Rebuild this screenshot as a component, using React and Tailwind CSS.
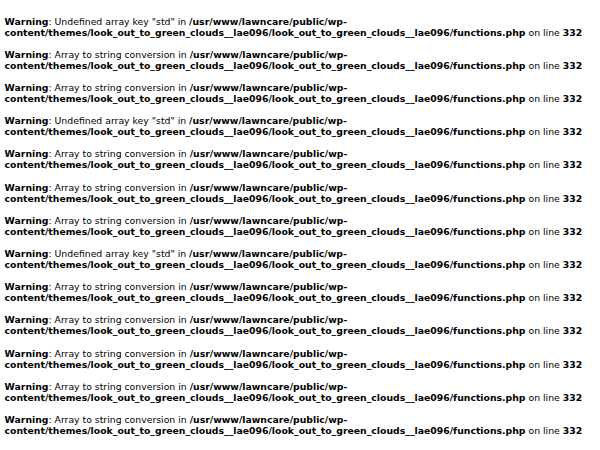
const PATH =
  "/usr/www/lawncare/public/wp-content/themes/look_out_to_green_clouds__lae096/look_out_to_green_clouds__lae096/functions.php"

const warnings = [
  'Undefined array key "std"',
  "Array to string conversion",
  "Array to string conversion",
  'Undefined array key "std"',
  "Array to string conversion",
  "Array to string conversion",
  "Array to string conversion",
  'Undefined array key "std"',
  "Array to string conversion",
  "Array to string conversion",
  "Array to string conversion",
  "Array to string conversion",
  "Array to string conversion",
]

export default function App() {
  return (
    <div className="min-h-[450px] bg-white px-[4.6px] py-[4.6px] font-['DejaVu_Sans',sans-serif] text-[9.3px] leading-[11.06px] text-black">
      {warnings.map((msg, i) => (
        <span key={i}>
          <br />
          <b>Warning</b>: {msg} in <b>{PATH}</b> on line <b>332</b>
          <br />
        </span>
      ))}
    </div>
  )
}
